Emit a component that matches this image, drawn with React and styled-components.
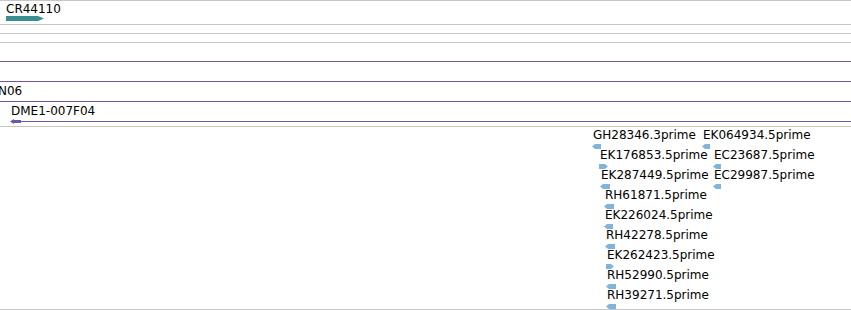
import React from "react";
import styled, { createGlobalStyle } from "styled-components";

const Global = createGlobalStyle`
  html, body { margin: 0; padding: 0; background: #fff; }
  body { font-family: "DejaVu Sans", "Liberation Sans", sans-serif; font-size: 12px; color: #000; overflow: hidden; }
`;

const GRAY = "#c6c6c6";
const PURPLE = "#6e57a6";
const TEAL = "#3a8e90";
const EST = "#82b3da";

const View = styled.div`
  width: 851px;
  border-top: 1px solid ${GRAY};
  display: flex;
  flex-direction: column;
`;

const Track = styled.div`
  display: flex;
  flex-direction: column;
  height: ${(p) => p.$h}px;
  padding-top: ${(p) => p.$pt || 0}px;
  box-sizing: border-box;
  border-bottom: 1px solid ${GRAY};
  overflow: hidden;
`;

const Row = styled.div`
  position: relative;
  flex: none;
  height: 20px;
`;

/* features sit on the genome canvas: their left edge is their coordinate */
const Feature = styled.div`
  position: absolute;
  top: 0;
  left: ${(p) => p.$x}px;
  right: ${(p) => (p.$span ? "0" : "auto")};
  display: flex;
  flex-direction: column;
  align-items: ${(p) => (p.$span ? "stretch" : "flex-start")};
  gap: ${(p) => p.$gap || 0}px;
  padding-top: ${(p) => (p.$pt === undefined ? 1 : p.$pt)}px;
`;

const Label = styled.span`
  display: block;
  height: 14px;
  line-height: 14px;
  margin-left: ${(p) => p.$shift || 0}px;
  white-space: nowrap;
  color: #000;
`;

const SpanLine = styled.div`
  position: relative;
  height: 1px;
  background: ${PURPLE};
  margin-left: ${(p) => (p.$arrow ? 2 : 0)}px;
`;

const ArrowHead = styled.svg`
  position: absolute;
  left: -2px;
  top: -2px;
  display: block;
`;

const Glyph = styled.svg`
  display: block;
  flex: none;
  margin-left: ${(p) => p.$shift || 0}px;
`;

function EstGlyph({ w, dir }) {
  const pts =
    dir === "left"
      ? `0,2.5 3,0 ${w},0 ${w},5 3,5`
      : `0,0 ${w - 3},0 ${w},2.5 ${w - 3},5 0,5`;
  return (
    <Glyph $shift={-1} width={w} height={5} viewBox={`0 0 ${w} 5`}>
      <polygon points={pts} fill={EST} />
    </Glyph>
  );
}

const estRows = [
  [
    { name: "GH28346.3prime", x: 593, w: 9, dir: "left" },
    { name: "EK064934.5prime", x: 703, w: 8, dir: "left" },
  ],
  [
    { name: "EK176853.5prime", x: 600, w: 9, dir: "right" },
    { name: "EC23687.5prime", x: 714, w: 8, dir: "left" },
  ],
  [
    { name: "EK287449.5prime", x: 601, w: 10, dir: "left" },
    { name: "EC29987.5prime", x: 714, w: 8, dir: "left" },
  ],
  [{ name: "RH61871.5prime", x: 605, w: 10, dir: "left" }],
  [{ name: "EK226024.5prime", x: 605, w: 9, dir: "left" }],
  [{ name: "RH42278.5prime", x: 606, w: 10, dir: "left" }],
  [{ name: "EK262423.5prime", x: 607, w: 8, dir: "right" }],
  [{ name: "RH52990.5prime", x: 607, w: 10, dir: "left" }],
  [{ name: "RH39271.5prime", x: 607, w: 10, dir: "left" }],
];

export default function App() {
  return (
    <>
      <Global />
      <View>
        <Track $h={24}>
          <Row>
            <Feature $x={6}>
              <Label>CR44110</Label>
              <Glyph width={38} height={5} viewBox="0 0 38 5">
                <polygon points="0,0 32,0 38,2.5 32,5 0,5" fill={TEAL} />
              </Glyph>
            </Feature>
          </Row>
        </Track>
        <Track $h={9} />
        <Track $h={9} />
        <Track $h={84}>
          <Row>
            <Feature $x={0} $span $gap={3}>
              <Label />
              <SpanLine />
            </Feature>
          </Row>
          <Row>
            <Feature $x={0} $span $gap={3}>
              <Label />
              <SpanLine />
            </Feature>
          </Row>
          <Row>
            <Feature $x={0} $span $gap={3}>
              <Label $shift={-2}>N06</Label>
              <SpanLine />
            </Feature>
          </Row>
          <Row>
            <Feature $x={10} $span $gap={3}>
              <Label $shift={1}>DME1-007F04</Label>
              <SpanLine $arrow>
                <ArrowHead width={11} height={5} viewBox="0 0 11 5">
                  <polygon points="0,2.5 4,0 4,1 11,1 11,4 4,4 4,5" fill={PURPLE} />
                </ArrowHead>
              </SpanLine>
            </Feature>
          </Row>
        </Track>
        <Track $h={183} $pt={1}>
          {estRows.map((row, i) => (
            <Row key={i}>
              {row.map((e) => (
                <Feature key={e.name} $x={e.x} $pt={0} $gap={2}>
                  <Label>{e.name}</Label>
                  <EstGlyph w={e.w} dir={e.dir} />
                </Feature>
              ))}
            </Row>
          ))}
        </Track>
      </View>
    </>
  );
}
